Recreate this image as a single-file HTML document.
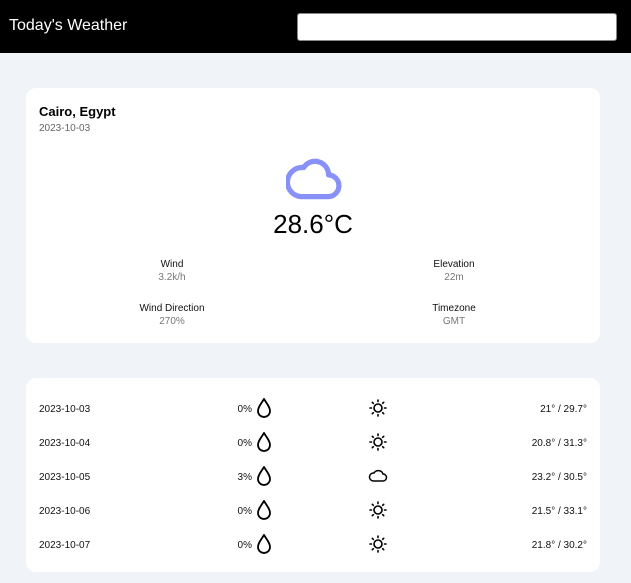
<!DOCTYPE html><html><head><style>
body{margin:0;width:631px;height:583px;background:#f0f3f8;font-family:"Liberation Sans",sans-serif;position:relative;overflow:hidden}
.hd{position:absolute;left:0;top:0;width:631px;height:53px;background:#000}
.hd span{position:absolute;left:9px;top:17px;color:#fff;font-size:16px}
.in{position:absolute;left:297px;top:13px;width:318px;height:26px;background:#fff;border:1px solid #888;border-radius:3px}
.card{position:absolute;left:26px;width:574px;background:#fff;border-radius:10px}
.a{position:absolute;font-size:10px;color:#666}
.l{position:absolute;font-size:10px;color:#111;text-align:center;width:160px}
.v{position:absolute;font-size:10px;color:#777;text-align:center;width:160px}
.row{position:absolute;left:0;width:574px;height:20px;font-size:10px;color:#111}
</style></head><body>
<div class="hd"><span>Today's Weather</span></div><div class="in"></div>
<div class="card" style="top:88px;height:255px">
<div style="position:absolute;left:13px;top:16px;font-size:13px;font-weight:bold">Cairo, Egypt</div>
<div class="a" style="left:13px;top:35px">2023-10-03</div>
<svg style="position:absolute;left:260px;top:68px" width="56" height="46" viewBox="0 0 54 44"><path d="M14 39 H40 A10 10 0 0 0 41 18 A13 13 0 0 0 17 11 A11.5 11.5 0 0 0 14 39 Z" fill="none" stroke="#8891f8" stroke-width="5" stroke-linejoin="round"/></svg>
<div style="position:absolute;left:0;width:574px;top:121px;text-align:center;font-size:26px;color:#000">28.6°C</div>
<div class="l" style="left:66px;top:171px">Wind</div><div class="v" style="left:66px;top:184px">3.2k/h</div>
<div class="l" style="left:348px;top:171px">Elevation</div><div class="v" style="left:348px;top:184px">22m</div>
<div class="l" style="left:66px;top:215px">Wind Direction</div><div class="v" style="left:66px;top:228px">270%</div>
<div class="l" style="left:348px;top:215px">Timezone</div><div class="v" style="left:348px;top:228px">GMT</div>
</div>
<div class="card" style="top:378px;height:194px" id="c2"></div>
<svg width="0" height="0" style="position:absolute"><defs>
<g id="drop"><path d="M8 1 C5 6 2 9 2 13 A6 6 0 0 0 14 13 C14 9 11 6 8 1 Z" fill="none" stroke="#000" stroke-width="1.8"/></g>
<g id="sun" stroke="#000" stroke-width="1.6" fill="none" stroke-linecap="round"><circle cx="9" cy="9" r="4"/><path d="M9 1v1.5M9 15.5V17M1 9h1.5M15.5 9H17M3.3 3.3l1 1M13.7 13.7l1 1M3.3 14.7l1-1M13.7 4.3l1-1"/></g>
<g id="cl"><path d="M5 14 H15 A3.5 3.5 0 0 0 15 7 A5 5 0 0 0 6 6 A4 4 0 0 0 5 14 Z" fill="none" stroke="#000" stroke-width="1.5"/></g>
</defs></svg>
<div style="position:absolute;left:26px;top:380px;width:574px">
<div class="row" style="top:24px"><span style="position:absolute;left:13px">2023-10-03</span><span style="position:absolute;right:348px">0%</span><svg style="position:absolute;left:230px;top:-6px" width="16" height="20"><use href="#drop"/></svg><svg style="position:absolute;left:343px;top:-5px" width="18" height="18"><use href="#sun"/></svg><span style="position:absolute;right:13px">21° / 29.7°</span></div>
<div class="row" style="top:58px"><span style="position:absolute;left:13px">2023-10-04</span><span style="position:absolute;right:348px">0%</span><svg style="position:absolute;left:230px;top:-6px" width="16" height="20"><use href="#drop"/></svg><svg style="position:absolute;left:343px;top:-5px" width="18" height="18"><use href="#sun"/></svg><span style="position:absolute;right:13px">20.8° / 31.3°</span></div>
<div class="row" style="top:92px"><span style="position:absolute;left:13px">2023-10-05</span><span style="position:absolute;right:348px">3%</span><svg style="position:absolute;left:230px;top:-6px" width="16" height="20"><use href="#drop"/></svg><svg style="position:absolute;left:342px;top:-5px" width="22" height="18"><use href="#cl"/></svg><span style="position:absolute;right:13px">23.2° / 30.5°</span></div>
<div class="row" style="top:126px"><span style="position:absolute;left:13px">2023-10-06</span><span style="position:absolute;right:348px">0%</span><svg style="position:absolute;left:230px;top:-6px" width="16" height="20"><use href="#drop"/></svg><svg style="position:absolute;left:343px;top:-5px" width="18" height="18"><use href="#sun"/></svg><span style="position:absolute;right:13px">21.5° / 33.1°</span></div>
<div class="row" style="top:160px"><span style="position:absolute;left:13px">2023-10-07</span><span style="position:absolute;right:348px">0%</span><svg style="position:absolute;left:230px;top:-6px" width="16" height="20"><use href="#drop"/></svg><svg style="position:absolute;left:343px;top:-5px" width="18" height="18"><use href="#sun"/></svg><span style="position:absolute;right:13px">21.8° / 30.2°</span></div>
</div>
</body></html>
